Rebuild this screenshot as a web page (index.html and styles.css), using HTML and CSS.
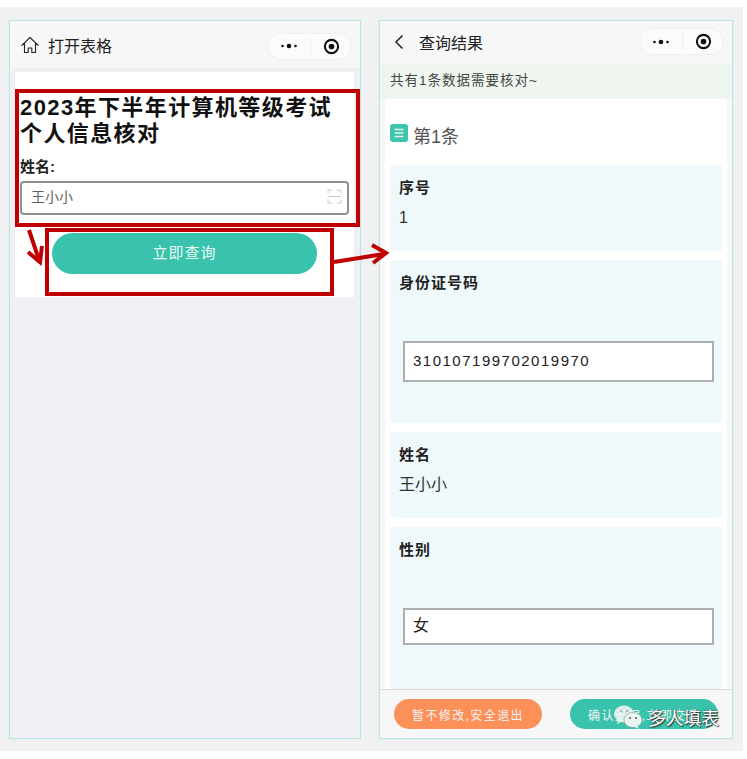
FILE: index.html
```html
<!DOCTYPE html>
<html lang="zh-CN">
<head>
<meta charset="utf-8">
<title>查询结果</title>
<link rel="stylesheet" href="styles.css">
</head>
<body>
<div class="stage">
  <section class="phone phone-left">
    <header class="nav nav-left">
      <div class="nav-title">
        <svg class="nav-icon" viewBox="0 0 18 18"><path d="M.8 9.300 9 1.500l8.200 7.800M3.500 7.500V16.500h3.700v-4.500h3.600v4.500h3.700V7.500" fill="none" stroke="#222" stroke-width="1.100" stroke-linejoin="round" stroke-linecap="round"/></svg>
        <span>打开表格</span>
      </div>
      <div class="capsule">
        <svg class="dots" viewBox="0 0 18 6"><circle cx="2.500" cy="3" r="1.300"/><circle cx="9" cy="3" r="2.300"/><circle cx="15.500" cy="3" r="1.300"/></svg>
        <i class="cap-sep"></i>
        <svg class="target" viewBox="0 0 18 18"><circle cx="9" cy="9" r="7" fill="none" stroke="#111" stroke-width="2.200"/><circle cx="9" cy="9" r="3"/></svg>
      </div>
    </header>
    <div class="left-body">
      <div class="form-card">
        <h1 class="form-title">2023年下半年计算机等级考试<br>个人信息核对</h1>
        <label class="form-label">姓名:</label>
        <div class="name-input">
          <span>王小小</span>
          <svg class="scan" viewBox="0 0 14 14"><path d="M1 4V1h4M9 1h4v3M1 10v3h4M9 13h4v-3M1 7h12" fill="none" stroke="#ccc" stroke-width="1"/></svg>
        </div>
        <div class="query-wrap"><button class="query-btn">立即查询</button></div>
      </div>
    </div>
  </section>

  <section class="phone phone-right">
    <header class="nav nav-right">
      <div class="nav-title">
        <svg class="back-icon" viewBox="0 0 10 16"><path d="M8.500 1.500 2 8l6.500 6.500" fill="none" stroke="#222" stroke-width="1.500"/></svg>
        <span>查询结果</span>
      </div>
      <div class="capsule">
        <svg class="dots" viewBox="0 0 18 6"><circle cx="2.500" cy="3" r="1.300"/><circle cx="9" cy="3" r="2.300"/><circle cx="15.500" cy="3" r="1.300"/></svg>
        <i class="cap-sep"></i>
        <svg class="target" viewBox="0 0 18 18"><circle cx="9" cy="9" r="7" fill="none" stroke="#111" stroke-width="2.200"/><circle cx="9" cy="9" r="3"/></svg>
      </div>
    </header>
    <div class="notice">共有1条数据需要核对~</div>
    <main class="result-card">
      <div class="record-head">
        <svg class="record-icon" viewBox="0 0 18 18"><rect width="18" height="18" rx="3" fill="#3cc4ac"/><path d="M4.500 5.500h9M4.500 9h9M4.500 12.500h9" stroke="#dff5f0" stroke-width="1.500"/></svg>
        <span>第1条</span>
      </div>
      <div class="field field-short"><div class="field-name">序号</div><div class="field-value">1</div></div>
      <div class="field field-tall"><div class="field-name">身份证号码</div><div class="field-input id-input">310107199702019970</div></div>
      <div class="field field-short"><div class="field-name">姓名</div><div class="field-value">王小小</div></div>
      <div class="field field-tall"><div class="field-name">性别</div><div class="field-input gender-input">女</div></div>
    </main>
    <footer class="actions">
      <button class="act act-exit">暂不修改,安全退出</button>
      <button class="act act-ok">确认无误,立即交表</button>
    </footer>
  </section>

  <svg class="annotations" viewBox="0 0 743 744">
    <g fill="none" stroke="#c00000">
      <rect x="17" y="84" width="341" height="134" stroke-width="4"/>
      <rect x="47" y="223" width="285" height="64" stroke-width="4"/>
      <g stroke-width="4">
        <path d="M29 223 39 253"/>
        <path d="M28 245 40 255 42 239"/>
        <path d="M334 255 384 247"/>
        <path d="M372 238 386 246 373 256"/>
      </g>
    </g>
  </svg>
  <div class="watermark">
    <svg class="wechat" viewBox="0 0 30 26"><ellipse cx="11" cy="10" rx="10" ry="8.500" fill="#f2f5f4" fill-opacity=".85"/><path d="M5 15 4 20l6-3z" fill="#f2f5f4" fill-opacity=".85"/><ellipse cx="20" cy="16" rx="9" ry="7.500" fill="#e8f5f1" stroke="#8a9a96" stroke-width=".6"/><path d="M24 21l2 4-5-2.500z" fill="#e8f5f1"/><circle cx="17" cy="14" r="1" fill="#555"/><circle cx="23" cy="14" r="1" fill="#555"/><circle cx="8" cy="7" r="1" fill="#999"/><circle cx="14" cy="7" r="1" fill="#999"/></svg>
    <span>多人填表</span>
  </div>
</div>
</body>
</html>
```
FILE: styles.css
```css
* { box-sizing: border-box; }
html, body { margin: 0; padding: 0; background: #fff; }
body {
  width: 747px;
  height: 759px;
  padding-top: 7px;
  overflow: hidden;
  font-family: "Liberation Sans", "Noto Sans CJK SC", sans-serif;
  color: #222;
}
.stage {
  position: relative;
  width: 743px;
  height: 744px;
  padding: 13px 10px 12px 9px;
  background: #f1f1f1;
  display: flex;
  gap: 18px;
}
.phone {
  display: flex;
  flex-direction: column;
  height: 719px;
  border: 1.5px solid #bfe3e8;
  box-shadow: 0 0 1px #bfe3e8;
  overflow: hidden;
  background: #f7f7f7;
}
.phone-left { width: 352px; }
.phone-right { width: 354px; }

.nav {
  display: flex;
  align-items: center;
  justify-content: space-between;
  flex: none;
  background: #f7f7f7;
}
.nav-left { height: 47px; padding: 3px 8px 0 11px; }
.nav-left .nav-title { margin-top: -2px; }
.nav-right { height: 43px; padding: 0 8px 2px 14px; }
.nav-title { display: flex; align-items: center; font-size: 16px; color: #222; }
.nav-icon { width: 18px; height: 18px; margin-right: 9px; }
.back-icon { width: 10px; height: 16px; margin-right: 15px; }
.capsule {
  width: 85px;
  height: 27px;
  border-radius: 14px;
  background: #fbfbfb;
  border: 1px solid #efefef;
  display: flex;
  align-items: center;
  padding-left: 12px;
}
.dots { width: 18px; height: 6px; fill: #111; }
.cap-sep { width: 1px; height: 17px; background: #eee; margin: 0 12px; }
.target { width: 17px; height: 17px; fill: #111; }

.left-body {
  flex: 1;
  background: #efeff4;
  padding: 4px 5px 0 5px;
}
.form-card {
  width: 339px;
  height: 225px;
  background: #fff;
  padding: 23px 5px 0 5px;
}
.form-title {
  margin: 0;
  font-size: 22px;
  line-height: 26px;
  font-weight: 700;
  letter-spacing: 1.400px;
  color: #111;
  white-space: nowrap;
}
.form-label {
  display: block;
  margin-top: 10px;
  font-size: 15px;
  line-height: 20px;
  font-weight: 700;
  color: #222;
}
.name-input {
  margin-top: 4px;
  width: 329px;
  height: 34px;
  border: 2px solid #8f8f8f;
  border-radius: 4px;
  display: flex;
  align-items: center;
  justify-content: space-between;
  padding: 0 5px 4px 9px;
  font-size: 14px;
  color: #5f5f5f;
}
.scan { width: 15px; height: 15px; }
.query-wrap { padding: 18px 0 0 32px; }
.query-btn {
  display: block;
  width: 265px;
  height: 41px;
  border: 0;
  border-radius: 21px;
  background: #39c3ac;
  color: #eafaf6;
  font-family: inherit;
  font-size: 15px;
  letter-spacing: 1px;
  padding: 0 0 4px;
}

.notice {
  flex: none;
  height: 35px;
  background: #eef6ef;
  padding: 0 0 0 10px;
  font-size: 13.500px;
  line-height: 33px;
  color: #444;
  letter-spacing: 1px;
}
.result-card {
  flex: 1;
  min-height: 0;
  overflow: hidden;
  margin: 0 5px;
  background: #fff;
  border-radius: 4px 4px 0 0;
  padding: 0 5px;
}
.record-head {
  height: 66px;
  display: flex;
  align-items: center;
  padding-top: 6px;
  font-size: 18px;
  color: #555;
}
.record-icon { width: 18px; height: 18px; margin: -4px 5px 0 0; }
.field {
  background: #eff8fb;
  border-radius: 4px;
  padding: 12px 9px 0;
  margin-bottom: 9px;
}
.field-short { height: 86px; }
.field-tall { height: 163px; }
.field-name { font-size: 15px; line-height: 22px; font-weight: 700; letter-spacing: 1px; color: #222; }
.field-value { margin-top: 8px; font-size: 16px; line-height: 22px; color: #333; }
.field-input {
  margin: 47px 0 0 4px;
  width: 311px;
  height: 41px;
  background: #fff;
  border: 2px solid #abafb0;
  padding: 0 8px;
  font-size: 15px;
  line-height: 35px;
  color: #222;
}
.id-input { letter-spacing: 1.500px; }
.gender-input { height: 37px; line-height: 31px; font-size: 16px; }

.actions {
  flex: none;
  height: 49px;
  border-top: 1px solid #dcdcdc;
  background: #f7f7f7;
  display: flex;
  justify-content: space-between;
  padding: 9px 14px 0 14px;
}
.act {
  width: 148px;
  height: 30px;
  border: 0;
  border-radius: 15px;
  color: #f4f4f4;
  font-family: inherit;
  font-size: 12px;
  letter-spacing: 1.400px;
  padding: 0;
}
.act-exit { background: #fb9059; }
.act-ok { background: #39c3ac; }

.annotations {
  position: absolute;
  left: 0;
  top: 0;
  width: 743px;
  height: 744px;
  pointer-events: none;
}
.watermark {
  position: absolute;
  left: 613px;
  top: 697px;
  display: flex;
  align-items: center;
  gap: 5px;
  font-size: 17.800px;
  color: #fff;
  text-shadow: 0 0 2px #333, 1px 1px 1px #333;
  white-space: nowrap;
}
.wechat { width: 30px; height: 26px; }
```
